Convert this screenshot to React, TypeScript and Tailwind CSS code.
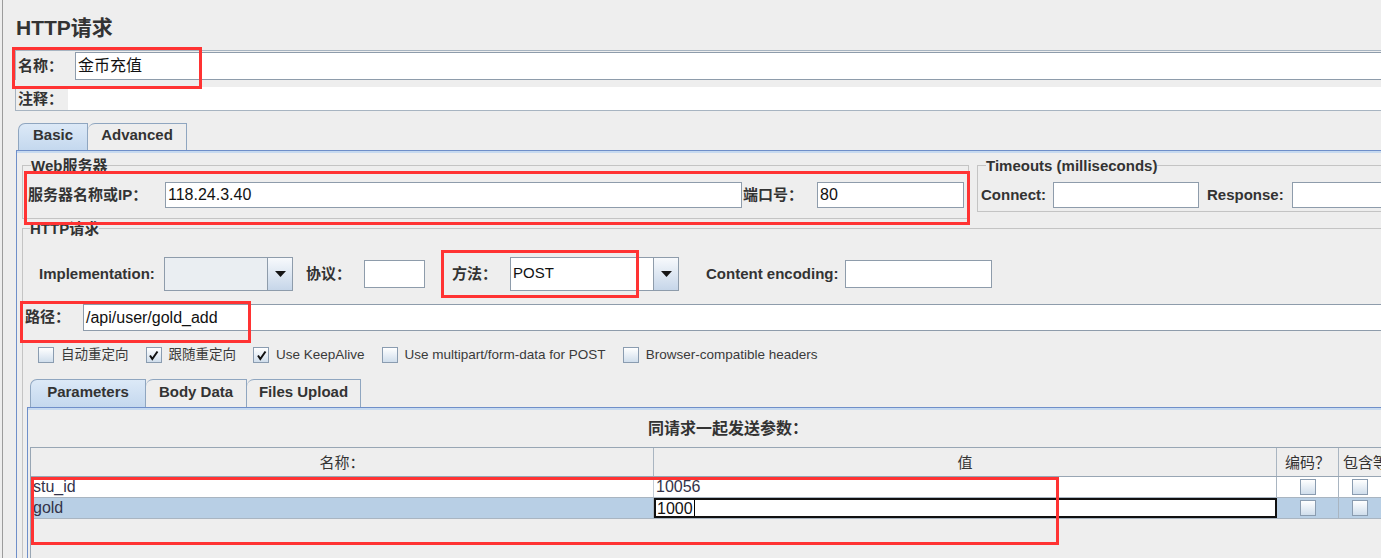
import React from 'react';

const font = "font-['Liberation_Sans','Noto_Sans_CJK_SC',sans-serif]";

const Check = ({ checked }: { checked?: boolean }) => (
  <span className="flex h-[16px] w-[16px] shrink-0 items-center justify-center border border-[#8a9cb0] bg-linear-to-b from-white to-[#d0deec]">
    {checked && (
      <svg width="11" height="11" viewBox="0 0 11 11">
        <path d="M2 5.5 L4.3 9 L9.5 1.5" stroke="#111" strokeWidth="2" fill="none" />
      </svg>
    )}
  </span>
);

const Arrow = () => (
  <div className="flex w-[25px] items-center justify-center border border-l-0 border-[#8e9cab] bg-linear-to-b from-[#f7f9fc] to-[#c6d6e9]">
    <svg width="11" height="6" viewBox="0 0 11 6">
      <path d="M0 0 H11 L5.5 6 Z" fill="#151515" />
    </svg>
  </div>
);

const Mark = ({ className }: { className: string }) => (
  <div className={`pointer-events-none absolute border-[3px] border-[#ff3333] ${className}`} />
);

const CheckItem = ({ checked, label }: { checked?: boolean; label: string }) => (
  <div className="flex items-center gap-[7px]">
    <Check checked={checked} />
    <span className="text-[13.5px] text-[#3a3a3a] whitespace-nowrap">{label}</span>
  </div>
);

export default function App() {
  return (
    <div className={`relative h-[558px] w-[1381px] overflow-hidden bg-[#eeeeee] text-[#333] ${font}`}>
      <div className="ml-[2px] h-full w-[1460px] border-l border-[#9c9c9c] pl-[12px]">
        {/* Title */}
        <div className="h-[50px] pl-[1px] pt-[16px] text-[21px] font-bold leading-[24px]">HTTP请求</div>

        {/* 名称 */}
        <div className="flex h-[30px] border-l border-t border-[#a7b4c1]">
          <div className="w-[59px] pl-[2px] text-[15px] font-bold leading-[30px]">名称：</div>
          <div className="mt-[1px] h-[28px] flex-1 border border-[#8e9cab] bg-white pl-[2px] text-[16px] leading-[26px] text-[#111]">
            金币充值
          </div>
        </div>

        {/* 注释 */}
        <div className="mt-[7px] flex h-[24px] border-b border-l border-[#a7b4c1]">
          <div className="w-[52px] pl-[2px] text-[15px] font-bold leading-[24px]">注释：</div>
          <div className="flex-1 bg-white" />
        </div>

        {/* Tabs */}
        <div className="ml-[3px] mt-[12px] flex h-[27px] text-[15px] font-bold">
          <div className="flex w-[70px] items-center justify-center rounded-tl-[7px] border border-b-0 border-[#8fa6c0] bg-linear-to-b from-[#dce9f7] to-[#c4d8ee] pb-[3px]">
            Basic
          </div>
          <div className="flex w-[99px] items-center justify-center rounded-tl-[7px] border border-b-0 border-l-0 border-[#8fa6c0] bg-[#eeeeee] pb-[3px]">
            Advanced
          </div>
        </div>

        {/* Basic panel */}
        <div className="ml-[1px] border-l border-t border-[#6f8fc9]">
          <div className="border-t-2 border-[#c7daf0] pl-[5px]">
            {/* Web server + timeouts */}
            <div className="mt-[4px] flex items-start gap-[8px]">
              <fieldset className="w-[947px] border border-[#c4c4c4] pb-[10px] pl-[5px] pr-[4px]">
                <legend className="ml-[3px] text-[15px] font-bold leading-[17px]">Web服务器</legend>
                <div className="mt-[8px] flex h-[26px] items-center">
                  <div className="w-[137px] text-[15px] font-bold">服务器名称或IP：</div>
                  <div className="h-[26px] w-[577px] border border-[#8e9cab] bg-white pl-[2px] text-[16px] leading-[24px] text-[#111]">
                    118.24.3.40
                  </div>
                  <div className="w-[75px] pl-[1px] text-[15px] font-bold">端口号：</div>
                  <div className="h-[26px] w-[147px] border border-[#8e9cab] bg-white pl-[2px] text-[16px] leading-[24px] text-[#111]">
                    80
                  </div>
                </div>
              </fieldset>
              <fieldset className="flex-1 border border-[#c4c4c4] pb-[3px] pl-[3px]">
                <legend className="ml-[5px] text-[15px] font-bold leading-[17px]">Timeouts (milliseconds)</legend>
                <div className="mt-[8px] flex h-[26px] items-center">
                  <div className="w-[72px] text-[15px] font-bold">Connect:</div>
                  <div className="h-[26px] w-[146px] border border-[#8e9cab] bg-white" />
                  <div className="ml-[8px] w-[85px] text-[15px] font-bold">Response:</div>
                  <div className="h-[26px] flex-1 border border-[#8e9cab] bg-white" />
                </div>
              </fieldset>
            </div>

            {/* HTTP request */}
            <fieldset className="mt-[1px] border border-[#c4c4c4] pb-[300px]">
              <legend className="ml-[7px] text-[15px] font-bold leading-[17px]">HTTP请求</legend>

              <div className="mt-[20px] flex h-[34px] items-center pl-[16px] text-[15px] font-bold">
                <div className="w-[125px]">Implementation:</div>
                <div className="flex h-[34px]">
                  <div className="w-[104px] border border-[#8e9cab] bg-[#eaeef2]" />
                  <Arrow />
                </div>
                <div className="ml-[13px] w-[58px]">协议：</div>
                <div className="h-[28px] w-[61px] border border-[#8e9cab] bg-white" />
                <div className="ml-[27px] w-[58px]">方法：</div>
                <div className="flex h-[34px]">
                  <div className="w-[144px] border border-[#8e9cab] bg-white pl-[2px] text-[15px] font-normal leading-[30px] text-[#111]">
                    POST
                  </div>
                  <Arrow />
                </div>
                <div className="ml-[27px] w-[139px]">Content encoding:</div>
                <div className="h-[28px] w-[147px] border border-[#8e9cab] bg-white" />
              </div>

              <div className="mt-[13px] flex h-[27px] items-center pl-[2px]">
                <div className="w-[58px] text-[15px] font-bold">路径：</div>
                <div className="h-[27px] flex-1 border border-r-0 border-[#8e9cab] bg-white pl-[2px] text-[16px] leading-[25px] text-[#111]">
                  /api/user/gold_add
                </div>
              </div>

              <div className="mt-[16px] flex h-[16px] items-center gap-[17px] pl-[15px]">
                <CheckItem label="自动重定向" />
                <CheckItem checked label="跟随重定向" />
                <CheckItem checked label="Use KeepAlive" />
                <CheckItem label="Use multipart/form-data for POST" />
                <CheckItem label="Browser-compatible headers" />
              </div>

              {/* Parameter tabs */}
              <div className="ml-[4px] mt-[16px]">
                <div className="ml-[3px] flex h-[28px] text-[15px] font-bold">
                  <div className="flex w-[116px] items-center justify-center rounded-tl-[7px] border border-b-0 border-[#8fa6c0] bg-linear-to-b from-[#dce9f7] to-[#c4d8ee] pb-[2px]">
                    Parameters
                  </div>
                  <div className="flex w-[101px] items-center justify-center rounded-tl-[7px] border border-b-0 border-l-0 border-[#8fa6c0] pb-[2px]">
                    Body Data
                  </div>
                  <div className="flex w-[114px] items-center justify-center rounded-tl-[7px] border border-b-0 border-l-0 border-[#8fa6c0] pb-[2px]">
                    Files Upload
                  </div>
                </div>
                <div className="h-[300px] border-l border-t border-[#6f8fc9]">
                  <div className="h-full border-t-2 border-[#c7daf0]">
                    <div className="flex h-[37px] items-center pl-[620px] text-[16px] font-bold">同请求一起发送参数：</div>
                    <div className="ml-[2px] h-[200px] border-l border-t border-[#98a6b4] text-[15px]">
                      <div className="flex h-[29px] border-b border-[#98a6b4]">
                        <div className="flex w-[623px] items-center justify-center border-r border-[#a9b5c1] pt-[2px]">名称：</div>
                        <div className="flex w-[623px] items-center justify-center border-r border-[#a9b5c1] pt-[2px]">值</div>
                        <div className="flex w-[62px] items-center justify-center border-r border-[#a9b5c1] pt-[2px]">编码？</div>
                        <div className="flex w-[120px] items-center overflow-hidden pl-[4px] pt-[2px] whitespace-nowrap">包含等于？</div>
                      </div>
                      <div className="flex h-[21px] border-b border-[#a9b5c1] bg-white text-[16px] leading-[20px] text-[#33334a]">
                        <div className="w-[623px] border-r border-[#c3ccd6] pl-[2px]">stu_id</div>
                        <div className="w-[623px] border-r border-[#a9b5c1] pl-[2px]">10056</div>
                        <div className="flex w-[62px] items-center justify-center border-r border-[#a9b5c1]">
                          <Check />
                        </div>
                        <div className="flex w-[120px] items-center pl-[13px]">
                          <Check />
                        </div>
                      </div>
                      <div className="flex h-[21px] border-b border-[#a9b5c1] bg-[#b8cfe5] text-[16px] leading-[20px] text-[#33334a]">
                        <div className="w-[623px] border-r border-[#a9b5c1] pl-[2px]">gold</div>
                        <div className="flex w-[623px] items-center border-2 border-[#111] bg-white pl-[1px] leading-[17px] text-[#111]">
                          1000<span className="ml-[1px] h-[16px] w-[1px] bg-black" />
                        </div>
                        <div className="flex w-[62px] items-center justify-center border-r border-[#a9b5c1]">
                          <Check />
                        </div>
                        <div className="flex w-[120px] items-center pl-[13px]">
                          <Check />
                        </div>
                      </div>
                    </div>
                  </div>
                </div>
              </div>
            </fieldset>
          </div>
        </div>
      </div>

      {/* annotation boxes */}
      <Mark className="left-[12px] top-[47px] h-[42px] w-[190px]" />
      <Mark className="left-[24px] top-[171px] h-[54px] w-[946px]" />
      <Mark className="left-[441px] top-[250px] h-[48px] w-[198px]" />
      <Mark className="left-[20px] top-[301px] h-[42px] w-[231px]" />
      <Mark className="left-[31px] top-[477px] h-[68px] w-[1028px]" />
    </div>
  );
}
